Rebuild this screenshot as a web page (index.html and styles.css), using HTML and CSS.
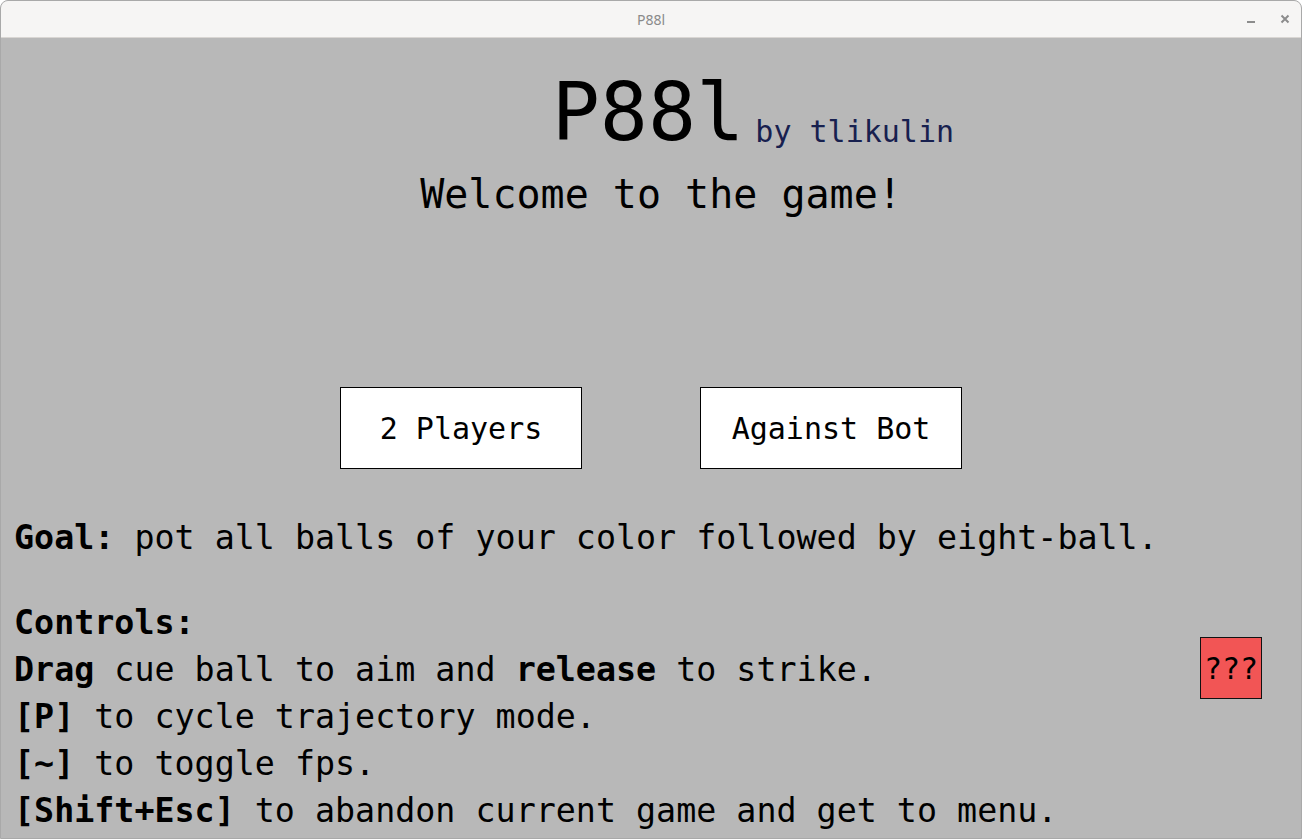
FILE: index.html
```html
<!DOCTYPE html>
<html>
<head>
<meta charset="utf-8">
<title>P88l</title>
<link rel="stylesheet" href="styles.css">
</head>
<body>
<div class="window">
  <div class="titlebar">
    <span class="titlebar-title">P88l</span>
    <div class="titlebar-controls">
      <svg class="tb-icon" width="16" height="16" viewBox="0 0 16 16"><rect x="4" y="10" width="8" height="2" fill="#8c8c8c"/></svg>
      <svg class="tb-icon" width="16" height="16" viewBox="0 0 16 16"><path d="M4.5 4.5 L11.5 11.5 M11.5 4.5 L4.5 11.5" stroke="#8c8c8c" stroke-width="2" fill="none"/></svg>
    </div>
  </div>
  <main class="content">
    <header class="title-row">
      <span class="title-side"></span>
      <h1 class="title">P88l</h1>
      <span class="author">by tlikulin</span>
    </header>
    <h2 class="welcome">Welcome to the game!</h2>
    <div class="buttons">
      <button class="menu-btn btn-two">2 Players</button>
      <button class="menu-btn btn-bot">Against Bot</button>
    </div>
    <section class="info">
      <p class="line"><b>Goal:</b> pot all balls of your color followed by eight-ball.</p>
      <p class="line controls-head"><b>Controls:</b></p>
      <p class="line"><b>Drag</b> cue ball to aim and <b>release</b> to strike.</p>
      <p class="line"><b>[P]</b> to cycle trajectory mode.</p>
      <p class="line"><b>[~]</b> to toggle fps.</p>
      <p class="line"><b>[Shift+Esc]</b> to abandon current game and get to menu.</p>
    </section>
    <button class="help-btn">???</button>
  </main>
</div>
</body>
</html>
```
FILE: styles.css
```css
html, body {
  margin: 0;
  padding: 0;
  background: #ffffff;
}
body {
  width: 1302px;
  height: 839px;
  overflow: hidden;
}
.window {
  box-sizing: border-box;
  width: 1302px;
  height: 839px;
  border: 1px solid #a9a9a9;
  border-radius: 8px 8px 0 0;
  overflow: hidden;
  display: flex;
  flex-direction: column;
  background: #b8b8b8;
}
.titlebar {
  position: relative;
  height: 36px;
  flex: 0 0 36px;
  background: #f6f5f4;
  border-bottom: 1px solid #d9d6d3;
  display: flex;
  align-items: center;
  justify-content: center;
}
.titlebar-title {
  font-family: "Noto Sans", "DejaVu Sans", sans-serif;
  font-size: 14px;
  color: #8a8a8a;
}
.titlebar-controls {
  position: absolute;
  right: 8px;
  top: 10px;
  display: flex;
  gap: 18px;
}
.tb-icon {
  display: block;
}
.content {
  position: relative;
  flex: 1;
  background: #b8b8b8;
  font-family: "DejaVu Sans Mono", monospace;
  color: #000;
}
.title-row {
  display: grid;
  grid-template-columns: 1fr auto 1fr;
  align-items: baseline;
  margin-top: 28px;
}
.title {
  margin: 0;
  padding-right: 6px;
  font-size: 80px;
  font-weight: normal;
  line-height: 93px;
}
.author {
  font-size: 30px;
  color: #17204f;
  padding-left: 5px;
  position: relative;
  top: 2px;
}
.welcome {
  margin: 12px 0 0;
  padding-left: 20px;
  text-align: center;
  font-size: 40px;
  font-weight: normal;
  line-height: 47px;
}
.buttons {
  display: flex;
  justify-content: center;
  gap: 118px;
  margin-top: 169px;
}
.menu-btn {
  box-sizing: border-box;
  height: 82px;
  background: #ffffff;
  border: 1px solid #000;
  font-family: "DejaVu Sans Mono", monospace;
  font-size: 30px;
  color: #000;
  padding: 0;
}
.btn-two { width: 242px; }
.btn-bot { width: 262px; }
.info {
  margin-top: 45px;
  padding-left: 13px;
}
.line {
  margin: 0;
  font-size: 33.35px;
  line-height: 47px;
  white-space: nowrap;
}
.controls-head {
  margin-top: 38px;
}
.help-btn {
  position: absolute;
  right: 39px;
  top: 599px;
  box-sizing: border-box;
  width: 62px;
  height: 62px;
  padding: 0;
  background: #f25555;
  border: 1px solid #111;
  font-family: "DejaVu Sans Mono", monospace;
  font-size: 30px;
  color: #000;
}
```
